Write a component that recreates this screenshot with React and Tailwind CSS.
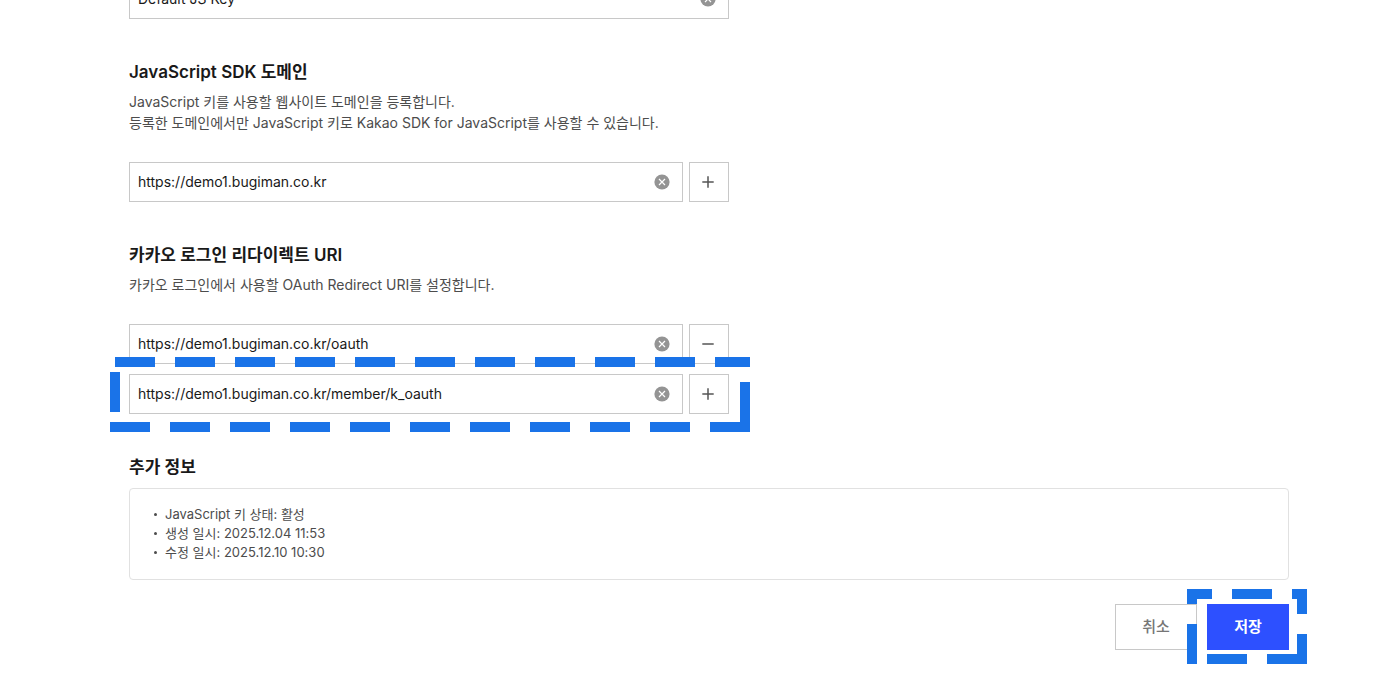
import { useState } from 'react';

const INFO = [
  'JavaScript 키 상태: 활성',
  '생성 일시: 2025.12.04 11:53',
  '수정 일시: 2025.12.10 10:30',
];

function ClearIcon() {
  return (
    <svg width="16" height="16" viewBox="0 0 16 16" aria-hidden="true">
      <circle cx="8" cy="8" r="7.6" fill="#949494" />
      <path d="M5 5l6 6M11 5l-6 6" stroke="#fff" strokeWidth="1.2" />
    </svg>
  );
}

function StepIcon({ type }) {
  return (
    <svg width="14" height="14" viewBox="0 0 14 14" aria-hidden="true">
      <path d="M0.3 7h11.4" stroke="#555" strokeWidth="1.5" />
      {type === 'add' && <path d="M6 1.3v11.4" stroke="#555" strokeWidth="1.5" />}
    </svg>
  );
}

function TextField({ label, initial }) {
  const [value, setValue] = useState(initial);

  return (
    <div className="flex h-10 min-w-0 flex-1 items-center border border-[#c8c8c8] bg-white pl-2 pr-3">
      <input
        type="text"
        aria-label={label}
        value={value}
        onChange={(e) => setValue(e.target.value)}
        className="min-w-0 flex-1 bg-transparent text-[14px] leading-5 text-[#191919] outline-none"
      />
      <button type="button" aria-label="지우기" onClick={() => setValue('')}>
        <ClearIcon />
      </button>
    </div>
  );
}

function StepButton({ type }) {
  return (
    <button
      type="button"
      aria-label={type === 'add' ? '추가' : '삭제'}
      className="flex size-10 shrink-0 items-center justify-center border border-[#c8c8c8] bg-white"
    >
      <StepIcon type={type} />
    </button>
  );
}

function SectionTitle({ children }) {
  return <h2 className="text-[17px] font-semibold leading-[26px] text-[#191919]">{children}</h2>;
}

function RowHighlight() {
  return (
    <svg
      width="640"
      height="75"
      viewBox="0 0 640 75"
      className="pointer-events-none absolute -left-[19px] -top-[17px] max-w-none"
      stroke="#1a73e8"
      strokeWidth="10"
      fill="none"
      aria-hidden="true"
    >
      <path d="M5 5H640" strokeDasharray="40 20" />
      <path d="M0 70H640" strokeDasharray="40 20" />
      <path d="M5 15V55" />
      <path d="M635 25V75" />
    </svg>
  );
}

function SaveHighlight() {
  return (
    <svg
      width="120"
      height="75"
      viewBox="0 0 120 75"
      className="pointer-events-none absolute -left-5 -top-[15px] max-w-none"
      stroke="#1a73e8"
      strokeWidth="10"
      fill="none"
      aria-hidden="true"
    >
      <path d="M0 5H25M45 5H85M105 5H120" />
      <path d="M20 70H60M80 70H120" />
      <path d="M5 0V15M5 35V75" />
      <path d="M115 0V25M115 45V75" />
    </svg>
  );
}

export default function App() {
  return (
    <main className="overflow-hidden bg-white pb-12 pl-[129px] pr-[111px] font-['Inter','Noto_Sans_CJK_KR',sans-serif]">
      <form onSubmit={(e) => e.preventDefault()}>
        <div className="max-w-[600px]">
          <div className="-mt-[21px] flex">
            <TextField label="키 이름" initial="Default JS Key" />
          </div>

          <section className="mt-10">
            <SectionTitle>JavaScript SDK 도메인</SectionTitle>
            <p className="mt-1.5 text-[14px] leading-[21px] text-[#4c4c4c]">
              JavaScript 키를 사용할 웹사이트 도메인을 등록합니다.
              <br />
              등록한 도메인에서만 JavaScript 키로 Kakao SDK for JavaScript를 사용할 수 있습니다.
            </p>
            <div className="mt-[29px] flex gap-1.5">
              <TextField label="JavaScript SDK 도메인" initial="https://demo1.bugiman.co.kr" />
              <StepButton type="add" />
            </div>
          </section>

          <section className="mt-10">
            <SectionTitle>카카오 로그인 리다이렉트 URI</SectionTitle>
            <p className="mt-1.5 text-[14px] leading-[21px] text-[#4c4c4c]">
              카카오 로그인에서 사용할 OAuth Redirect URI를 설정합니다.
            </p>
            <div className="mt-[29px] flex gap-1.5">
              <TextField label="리다이렉트 URI 1" initial="https://demo1.bugiman.co.kr/oauth" />
              <StepButton type="remove" />
            </div>
            <div className="relative mt-2.5 flex gap-1.5">
              <TextField label="리다이렉트 URI 2" initial="https://demo1.bugiman.co.kr/member/k_oauth" />
              <StepButton type="add" />
              <RowHighlight />
            </div>
          </section>
        </div>

        <section className="mt-10">
          <SectionTitle>추가 정보</SectionTitle>
          <ul className="mt-2 rounded border border-[#e1e1e1] px-6 pb-[17px] pt-4 text-[13px] leading-[19px] text-[#4c4c4c]">
            {INFO.map((line) => (
              <li key={line} className="flex items-center gap-2">
                <span className="size-[3px] rounded-full bg-[#4c4c4c]" />
                {line}
              </li>
            ))}
          </ul>
        </section>

        <div className="mt-6 flex justify-end gap-2.5">
          <button
            type="button"
            className="h-[46px] w-[82px] border border-[#c8c8c8] bg-white text-[15px] font-medium text-[#767676]"
          >
            취소
          </button>
          <div className="relative">
            <button type="submit" className="h-[46px] w-[82px] bg-[#2d50ff] text-[15px] font-bold text-white">
              저장
            </button>
            <SaveHighlight />
          </div>
        </div>
      </form>
    </main>
  );
}
